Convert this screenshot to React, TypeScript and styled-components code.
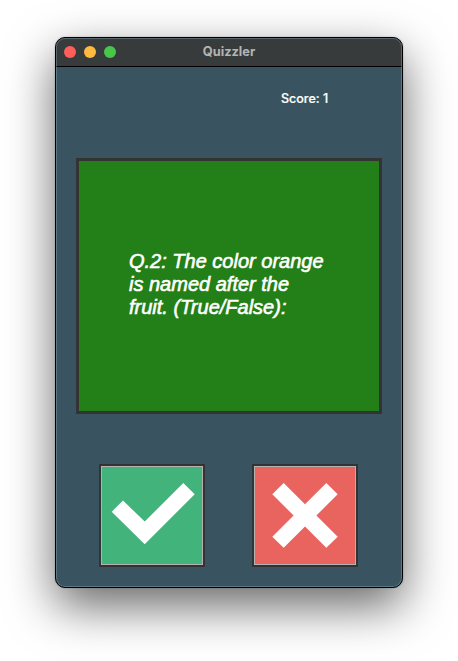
import React from "react";
import styled, { createGlobalStyle } from "styled-components";

const GlobalStyle = createGlobalStyle`
  * { box-sizing: border-box; }
  body { margin: 0; background: #fff; overflow: hidden; }
`;

const Desktop = styled.div`
  display: flex;
  justify-content: center;
  align-items: flex-start;
  width: 458px;
  height: 661px;
  padding-top: 37px;
  overflow: hidden;
`;

const Window = styled.main`
  position: relative;
  display: flex;
  flex-direction: column;
  width: 348px;
  height: 551px;
  border: 1px solid #000;
  border-radius: 10px;
  background: #395460;
  overflow: hidden;
  box-shadow: 0 18px 48px rgba(0, 0, 0, 0.6), 0 0 2px rgba(0, 0, 0, 0.25);

  &::after {
    content: "";
    position: absolute;
    inset: 0;
    border-radius: 9px;
    box-shadow: inset 0 0 0 1px rgba(160, 200, 215, 0.32);
    pointer-events: none;
  }
`;

const TitleBar = styled.header`
  display: grid;
  grid-template-columns: 60px 1fr 60px;
  align-items: center;
  flex: none;
  height: 29px;
  padding: 0 8px;
  background: #383b3b;
  border-bottom: 1px solid #000;
`;

const Lights = styled.div`
  display: flex;
  gap: 8px;
`;

const Light = styled.span<{ $color: string }>`
  width: 12px;
  height: 12px;
  border-radius: 50%;
  background: ${(p) => p.$color};
`;

const Title = styled.h1`
  margin: 0;
  padding-bottom: 1px;
  text-align: center;
  font: 700 12.8px/15px Inter, sans-serif;
  color: #b2b4b4;
`;

const Content = styled.section`
  display: flex;
  flex-direction: column;
  padding: 24px 20px 0;
`;

const Score = styled.div`
  height: 16px;
  padding-left: 205px;
  font: 500 12.5px/16px Inter, sans-serif;
  color: #fff;
  -webkit-text-stroke: 0.2px #fff;
`;

const Card = styled.div`
  display: flex;
  align-items: center;
  width: 306px;
  height: 256px;
  margin-top: 51px;
  padding: 0 50px 4px;
  border: 3px solid #333;
  background: #237f17;
`;

const Question = styled.p`
  margin: 0;
  font: italic 400 20px/23px "Liberation Sans", Arial, sans-serif;
  color: #fff;
  -webkit-text-stroke: 0.6px #fff;
  white-space: pre;
`;

const Answers = styled.div`
  display: flex;
  gap: 47px;
  margin-top: 50px;
  padding-left: 23px;
`;

const AnswerButton = styled.button<{ $color: string }>`
  width: 106px;
  height: 103px;
  padding: 0;
  border: 2px solid #333;
  background: ${(p) => p.$color};
  box-shadow: inset 0 0 0 1px #b3b3b3;

  svg { display: block; }
`;

export default function App() {
  return (
    <>
      <GlobalStyle />
      <Desktop>
        <Window>
          <TitleBar>
            <Lights>
              <Light $color="#ff5f5a" />
              <Light $color="#ffb940" />
              <Light $color="#48c64c" />
            </Lights>
            <Title>Quizzler</Title>
          </TitleBar>
          <Content>
            <Score>Score: 1</Score>
            <Card>
              <Question>{"Q.2: The color orange\nis named after the\nfruit. (True/False):"}</Question>
            </Card>
            <Answers>
              <AnswerButton $color="#43b37c" aria-label="True">
                <svg width="102" height="99" viewBox="0 0 102 99">
                  <path fill="#fff" d="M10.7 45.7 22 34.5 43.7 55.5 82.3 17 93.7 28.3 43.7 78.2Z" />
                </svg>
              </AnswerButton>
              <AnswerButton $color="#ea645f" aria-label="False">
                <svg width="102" height="99" viewBox="0 0 102 99">
                  <path
                    fill="#fff"
                    d="M29.7 17 51 38.3 72.3 17 83.7 28.3 62.4 49.5 83.7 70.7 72.3 81.8 51 60.6 29.7 81.8 18.3 70.7 39.6 49.5 18.3 28.3Z"
                  />
                </svg>
              </AnswerButton>
            </Answers>
          </Content>
        </Window>
      </Desktop>
    </>
  );
}
